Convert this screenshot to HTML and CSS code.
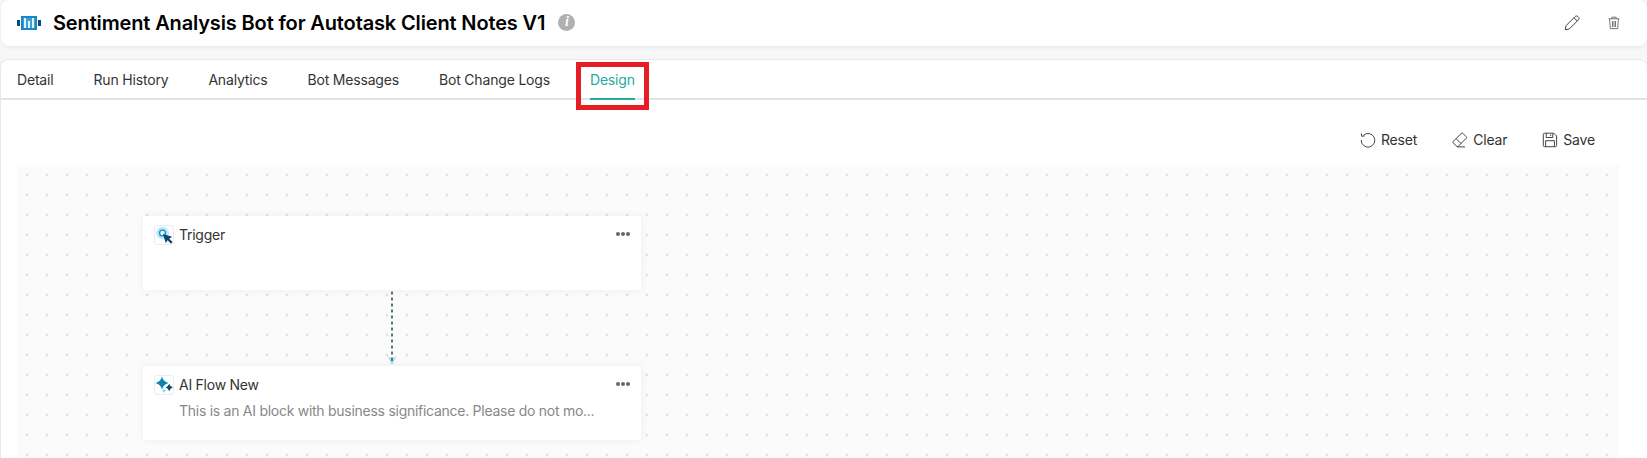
FILE: index.html
```html
<!DOCTYPE html>
<html lang="en">
	<head>
		<meta charset="utf-8" />
		<title>Sentiment Analysis Bot for Autotask Client Notes V1</title>
		<link rel="stylesheet" href="styles.css">
	</head>
	<body>
		<header class="header">
			<svg class="bot-icon" width="24" height="16" viewBox="0 0 24 16">
				<path fill="#0b4a7c" d="M0 5h3v6H0zM21 5h3v6h-3z" />
				<path fill="#1b87c4" d="M4 1h16v14H4z" />
				<path fill="#3ba1d6" d="M6 3h12v10H6z" />
				<path fill="#e4f4fb" d="M7 3h2v10H7zM11 6h2v7h-2zM15 3h2v10h-2z" />
			</svg>
			<h1 class="title">Sentiment Analysis Bot for Autotask Client Notes V1</h1>
			<span class="info">i</span>
			<div class="header-actions">
				<svg width="16" height="16" viewBox="0 0 16 16" class="icon">
					<path d="M1.2 14.8l.9-4.2 9-9c.8-.8 2-.8 2.8 0l.5.5c.8.8.8 2 0 2.8l-9 9zM10 2.8l3.2 3.2" />
				</svg>
				<svg width="14" height="14" viewBox="0 0 14 14" class="icon trash">
					<path d="M1.5 2.8h11M4.8 2.6V1.2h4.4v1.4M2.6 3l.7 9.6h7.4l.7-9.6M5.5 5v6M7 5v6M8.5 5v6" />
				</svg>
			</div>
		</header>
		<main class="panel">
			<nav class="tabs">
				<a class="tab">Detail</a>
				<a class="tab">Run History</a>
				<a class="tab">Analytics</a>
				<a class="tab">Bot Messages</a>
				<a class="tab">Bot Change Logs</a>
				<a class="tab active">Design<span class="highlight"></span></a>
			</nav>
			<div class="toolbar">
				<button class="tool">
					<svg width="16" height="16" viewBox="0 0 16 16" class="icon">
						<path d="M3.5 3.2A6.8 6.8 0 1 1 1.2 8M1.4 1.5l.3 2.8 3-.4" />
					</svg>
					Reset
				</button>
				<button class="tool">
					<svg width="16" height="16" viewBox="0 0 16 16" class="icon">
						<path d="M1.1 9.6L9.4 1.3q.7-.6 1.4 0l3.5 3.5q.6.7 0 1.4l-8.3 8.3H5L1.1 10.8q-.5-.6 0-1.2zM4.2 6.7l5 5M5 14.9h8" />
					</svg>
					Clear
				</button>
				<button class="tool">
					<svg width="16" height="16" viewBox="0 0 16 16" class="icon">
						<path d="M2.5 1.2h9.3l2.8 2.8v9.5q0 1.2-1.2 1.2H2.5q-1.2 0-1.2-1.2V2.4q0-1.2 1.2-1.2zM4.2 1.3v4.2h6.6V1.3M3.6 14.6V8.7h8.8v5.9M8.7 2.5v1.6" />
					</svg>
					Save
				</button>
			</div>
			<div class="canvas">
				<div class="flow">
					<section class="node">
						<div class="node-head">
							<span class="node-icon">
								<svg width="18" height="18" viewBox="0 0 18 18">
									<circle cx="7.5" cy="7" r="6.5" fill="#c9ecfa" />
									<circle cx="7.5" cy="7" r="4.8" fill="#a9dff4" />
									<circle cx="7.5" cy="7" r="2.9" fill="#e8f7fd" stroke="#1f8cbf" stroke-width="1.3" />
									<path fill="#0a4876" d="M8 8l9.2 2.8-3 1.9 3.4 3.4-1.6 1.6-3.4-3.4-1.9 2.8z" />
								</svg>
							</span>
							<span class="node-name">Trigger</span>
							<span class="more"><i></i><i></i><i></i></span>
						</div>
					</section>
					<svg class="link" width="12" height="76" viewBox="0 0 12 76">
						<path d="M6 1.5v70" stroke="#59737e" stroke-width="2" stroke-dasharray="3" />
						<path d="M1.5 66L6 69l4.5-3L6 75z" fill="#a9d9ee" />
						<path d="M6 68v3" stroke="#4d7b93" stroke-width="2" />
					</svg>
					<section class="node">
						<div class="node-head">
							<span class="node-icon">
								<svg width="18" height="18" viewBox="0 0 18 18">
									<path fill="#0c84ae" d="M7 .5Q8.3 5.7 13.5 7 8.3 8.3 7 13.5 5.7 8.3.5 7 5.7 5.7 7 .5z" />
									<path fill="#0a4876" d="M14.2 7.8q.9 2.8 3.6 3.7-2.7.9-3.6 3.7-.9-2.8-3.6-3.7 2.7-.9 3.6-3.7z" />
									<path fill="#7fd0ef" d="M9 12.5q.4 2 2 2.3-1.6.4-2 2.3-.4-1.9-2-2.3 1.6-.3 2-2.3z" />
								</svg>
							</span>
							<span class="node-name">AI Flow New</span>
							<span class="more"><i></i><i></i><i></i></span>
						</div>
						<p class="node-text">This is an AI block with business significance. Please do not mo...</p>
					</section>
				</div>
			</div>
		</main>
	</body>
</html>
```
FILE: styles.css
```css
* {
	box-sizing: border-box;
}
body {
	margin: 0;
	height: 458px;
	overflow: hidden;
	background: #f7f7f7;
	color: #333;
	font-family: Inter, "Liberation Sans", sans-serif;
	font-size: 14px;
	letter-spacing: -0.18px;
}
.header {
	display: flex;
	align-items: center;
	height: 46px;
	margin-left: 1px;
	padding: 0 26px 0 16px;
	background: #fff;
	border-radius: 8px;
	box-shadow: 0 1px 4px rgba(0, 0, 0, 0.07);
}
.title {
	margin: 0 0 0 12px;
	color: #000;
	font-size: 20px;
	font-weight: 600;
	letter-spacing: -0.14px;
	line-height: 45px;
	white-space: nowrap;
}
.info {
	width: 17px;
	height: 17px;
	margin: 0 0 1px 13px;
	border-radius: 50%;
	background: #b0b0b0;
	color: #fff;
	font: italic bold 14px/16px "Liberation Serif", serif;
	text-align: center;
}
.header-actions {
	display: flex;
	align-items: center;
	gap: 27px;
	margin-left: auto;
}
.icon {
	fill: none;
	stroke: #444;
	stroke-width: 1;
	stroke-linejoin: round;
}
.trash {
	stroke: #666;
	stroke-width: 0.9;
}
.panel {
	height: 420px;
	margin: 13px 0 0 0;
	background: #fff;
	border: 1px solid #e8e8ea;
	border-right: 0;
	border-radius: 8px 8px 0 0;
}
.tabs {
	display: flex;
	gap: 40px;
	height: 40px;
	padding-left: 16px;
	border-bottom: 2px solid #e1e3ea;
}
.tab {
	position: relative;
	height: 40px;
	line-height: 40px;
	white-space: nowrap;
}
.active {
	color: #26ab9c;
	border-bottom: 2px solid #26ab9c;
}
.highlight {
	position: absolute;
	top: 2px;
	left: -14px;
	width: 73px;
	height: 48px;
	border: 5px solid #e71d25;
}
.toolbar {
	display: flex;
	justify-content: flex-end;
	gap: 35px;
	height: 65px;
	padding: 15px 52px 0 0;
}
.tool {
	display: flex;
	align-items: center;
	gap: 5px;
	height: 49px;
	padding: 0;
	border: 0;
	background: none;
	color: #333;
	font: inherit;
	letter-spacing: -0.18px;
}
.tool .icon {
	margin-top: 1px;
}
.canvas {
	width: 1602px;
	height: 300px;
	margin-left: 16px;
	padding: 51px 0 0 126px;
	background: #fbfbfb radial-gradient(circle, #e2e2e2 1px, transparent 1.8px) 0 0 / 20px 20px;
}
.flow {
	display: flex;
	flex-direction: column;
	align-items: center;
	width: 498px;
}
.node {
	width: 498px;
	height: 74px;
	padding: 9px 11px;
	background: #fff;
	border-radius: 2px;
	box-shadow: 0 0 8px rgba(0, 0, 0, 0.06);
}
.node-head {
	display: flex;
	align-items: center;
	height: 20px;
}
.node-icon {
	display: flex;
	align-items: center;
	justify-content: center;
	width: 20px;
	height: 20px;
	border: 1px solid #e9edf0;
	border-radius: 3px;
}
.node-name {
	margin-left: 5px;
	letter-spacing: -0.25px;
	line-height: 20px;
}
.more {
	display: flex;
	gap: 1px;
	margin: 0 0 2px auto;
}
.more i {
	width: 4px;
	height: 4px;
	border-radius: 50%;
	background: #666;
}
.node-text {
	margin: 6px 0 0 25px;
	color: #888;
	letter-spacing: -0.27px;
	line-height: 20px;
	white-space: nowrap;
}
```
